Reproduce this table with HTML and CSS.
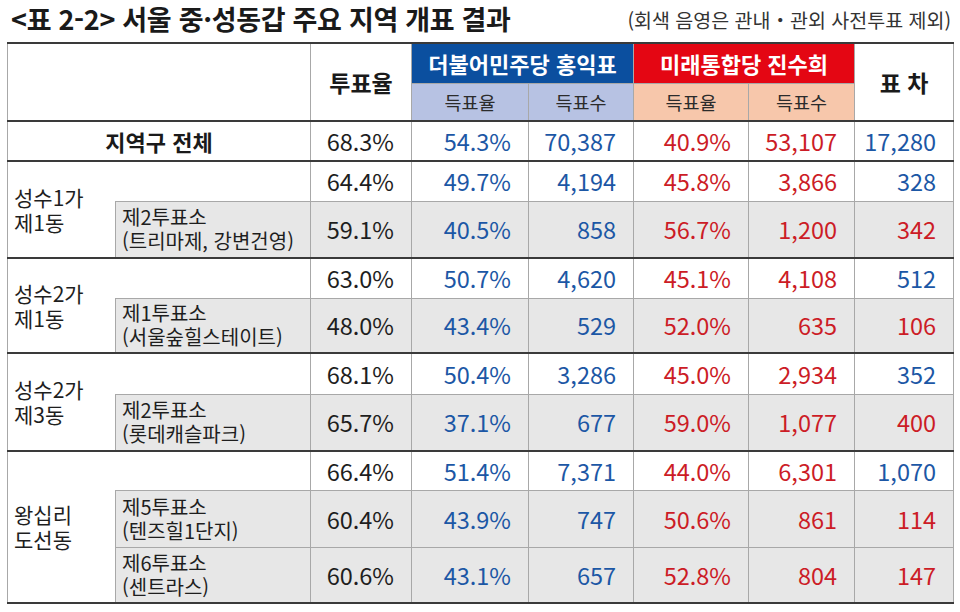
FILE: index.html
```html
<!DOCTYPE html>
<html lang="ko">
<head>
<meta charset="utf-8">
<link rel="stylesheet" href="styles.css">
</head>
<body>
<div class="page">
  <div class="top">
    <h1 class="title">&lt;표 2-2&gt; 서울 중·성동갑 주요 지역 개표 결과</h1>
    <div class="note">(회색 음영은 관내・관외 사전투표 제외)</div>
  </div>
  <table class="result">
    <colgroup>
      <col class="c1"><col class="c2"><col class="c3"><col class="c4"><col class="c5"><col class="c6"><col class="c7"><col class="c8">
    </colgroup>
    <thead>
      <tr class="h1">
        <th colspan="2" rowspan="2" class="blank"></th>
        <th rowspan="2" class="hturn">투표율</th>
        <th colspan="2" class="pblue">더불어민주당 홍익표</th>
        <th colspan="2" class="pred">미래통합당 진수희</th>
        <th rowspan="2" class="hdiff">표 차</th>
      </tr>
      <tr class="h2">
        <th class="sblue">득표율</th>
        <th class="sblue">득표수</th>
        <th class="sred">득표율</th>
        <th class="sred">득표수</th>
      </tr>
    </thead>
    <tbody>
      <tr class="rt">
        <td colspan="2" class="total">지역구 전체</td>
        <td class="n">68.3%</td>
        <td class="n b">54.3%</td>
        <td class="n b">70,387</td>
        <td class="n r">40.9%</td>
        <td class="n r">53,107</td>
        <td class="n b">17,280</td>
      </tr>
    </tbody>
    <tbody>
      <tr class="ra">
        <td rowspan="2" class="name">성수1가<br>제1동</td>
        <td class="empty"></td>
        <td class="n">64.4%</td>
        <td class="n b">49.7%</td>
        <td class="n b">4,194</td>
        <td class="n r">45.8%</td>
        <td class="n r">3,866</td>
        <td class="n b">328</td>
      </tr>
      <tr class="rb gray">
        <td class="sub">제2투표소<br>(트리마제, 강변건영)</td>
        <td class="n">59.1%</td>
        <td class="n b">40.5%</td>
        <td class="n b">858</td>
        <td class="n r">56.7%</td>
        <td class="n r">1,200</td>
        <td class="n r">342</td>
      </tr>
    </tbody>
    <tbody>
      <tr class="ra">
        <td rowspan="2" class="name">성수2가<br>제1동</td>
        <td class="empty"></td>
        <td class="n">63.0%</td>
        <td class="n b">50.7%</td>
        <td class="n b">4,620</td>
        <td class="n r">45.1%</td>
        <td class="n r">4,108</td>
        <td class="n b">512</td>
      </tr>
      <tr class="rc gray">
        <td class="sub">제1투표소<br>(서울숲힐스테이트)</td>
        <td class="n">48.0%</td>
        <td class="n b">43.4%</td>
        <td class="n b">529</td>
        <td class="n r">52.0%</td>
        <td class="n r">635</td>
        <td class="n r">106</td>
      </tr>
    </tbody>
    <tbody>
      <tr class="rd">
        <td rowspan="2" class="name">성수2가<br>제3동</td>
        <td class="empty"></td>
        <td class="n">68.1%</td>
        <td class="n b">50.4%</td>
        <td class="n b">3,286</td>
        <td class="n r">45.0%</td>
        <td class="n r">2,934</td>
        <td class="n b">352</td>
      </tr>
      <tr class="rb gray">
        <td class="sub">제2투표소<br>(롯데캐슬파크)</td>
        <td class="n">65.7%</td>
        <td class="n b">37.1%</td>
        <td class="n b">677</td>
        <td class="n r">59.0%</td>
        <td class="n r">1,077</td>
        <td class="n r">400</td>
      </tr>
    </tbody>
    <tbody>
      <tr class="re">
        <td rowspan="3" class="name">왕십리<br>도선동</td>
        <td class="empty"></td>
        <td class="n">66.4%</td>
        <td class="n b">51.4%</td>
        <td class="n b">7,371</td>
        <td class="n r">44.0%</td>
        <td class="n r">6,301</td>
        <td class="n b">1,070</td>
      </tr>
      <tr class="rb gray">
        <td class="sub">제5투표소<br>(텐즈힐1단지)</td>
        <td class="n">60.4%</td>
        <td class="n b">43.9%</td>
        <td class="n b">747</td>
        <td class="n r">50.6%</td>
        <td class="n r">861</td>
        <td class="n r">114</td>
      </tr>
      <tr class="rf gray">
        <td class="sub">제6투표소<br>(센트라스)</td>
        <td class="n">60.6%</td>
        <td class="n b">43.1%</td>
        <td class="n b">657</td>
        <td class="n r">52.8%</td>
        <td class="n r">804</td>
        <td class="n r">147</td>
      </tr>
    </tbody>
  </table>
</div>
</body>
</html>
```

FILE: styles.css
```css
html, body {
  margin: 0;
  padding: 0;
  background: #ffffff;
}

body {
  font-family: "Noto Sans CJK KR", "Noto Sans", sans-serif;
  color: #1e1e1e;
}

.page {
  width: 960px;
  height: 612px;
  padding: 0 0 0 7px;
  box-sizing: border-box;
}

.top {
  display: flex;
  justify-content: space-between;
  align-items: flex-end;
  width: 944px;
  height: 42px;
  box-sizing: border-box;
  padding: 0 0 7px 4px;
}

.title {
  margin: 0;
  font-size: 27px;
  font-weight: 700;
  line-height: 32px;
  color: #1a1a1a;
  letter-spacing: -0.3px;
}

.note {
  font-size: 19.5px;
  line-height: 24px;
  color: #333333;
  padding-bottom: 3px;
}

.result {
  border-collapse: collapse;
  table-layout: fixed;
  width: 946px;
  border-top: 2px solid #3a3a3a;
  border-bottom: 2px solid #3a3a3a;
  border-left: 1px solid #a8a8a8;
  border-right: 1px solid #a8a8a8;
}

.c1 { width: 108px; }
.c2 { width: 195px; }
.c3 { width: 101px; }
.c4 { width: 117px; }
.c5 { width: 105px; }
.c6 { width: 115px; }
.c7 { width: 106px; }
.c8 { width: 99px; }

.result th,
.result td {
  border: 1px solid #a8a8a8;
  padding: 0;
  overflow: hidden;
  white-space: nowrap;
}

.result thead {
  border-bottom: 2px solid #3a3a3a;
}

.result tbody {
  border-top: 2px solid #3a3a3a;
}

.h1 { height: 40px; }
.h2 { height: 38px; }

.hturn,
.hdiff {
  font-size: 23px;
  font-weight: 700;
  color: #1a1a1a;
  background: #ffffff;
}

.pblue,
.pred {
  font-size: 22px;
  font-weight: 700;
  color: #ffffff;
  border-bottom: none;
}

.pblue { background: #0b4f9f; }
.pred { background: #e40613; }

.sblue,
.sred {
  font-size: 18.5px;
  font-weight: 400;
  color: #2b2b2b;
  border-top: none;
}

.sblue { background: #b7c2e3; }
.sred { background: #f7c7ab; }

.rt { height: 40px; }
.ra { height: 40px; }
.rb { height: 57px; }
.rc { height: 55px; }
.rd { height: 41px; }
.re { height: 39px; }
.rf { height: 56px; }

.total {
  text-align: center;
  font-size: 22px;
  font-weight: 700;
  color: #1a1a1a;
}

.name {
  font-size: 21px;
  line-height: 25px;
  padding-left: 6px !important;
  text-align: left;
  vertical-align: middle;
  border-right: none !important;
  background: #ffffff;
}

.empty {
  border-left: none !important;
  background: #ffffff;
}

.sub {
  font-size: 20px;
  line-height: 24px;
  padding-left: 6px !important;
  text-align: left;
  vertical-align: middle;
}

.gray td {
  background: #e7e7e7;
}

.n {
  text-align: right;
  padding-right: 17px !important;
  font-size: 23.5px;
  color: #1e1e1e;
}

.n.b { color: #1c57a5; }
.n.r { color: #cc1c26; }
```
